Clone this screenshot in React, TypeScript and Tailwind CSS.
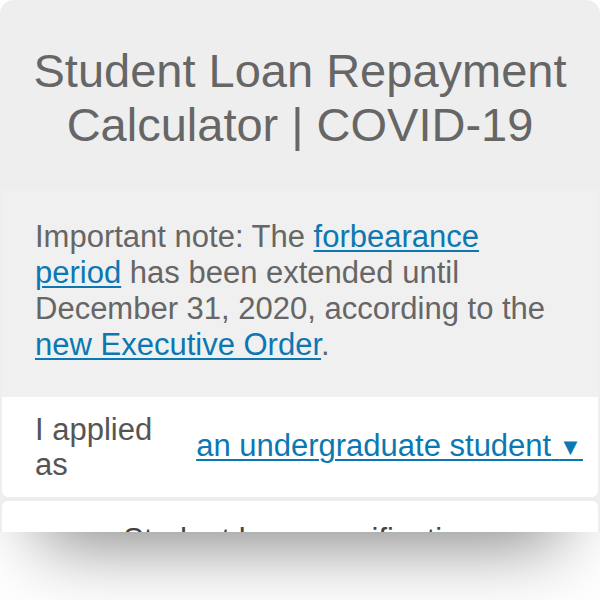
import React from "react";

const App: React.FC = () => {
  return (
    <div className="h-[600px] w-[600px] bg-white font-['Liberation_Sans',Arial,sans-serif]">
      <div className="h-[532px] overflow-hidden rounded-t-[14px] bg-[#eeeeee] shadow-[0_50px_70px_-40px_rgba(0,0,0,0.5)]">
        {/* Title */}
        <header className="pt-[44px] pb-[38px] text-center text-[47px] leading-[54px] text-[#666666]">
          <h1>
            Student Loan Repayment
            <br />
            Calculator | COVID-19
          </h1>
        </header>

        <div className="flex flex-col px-[2px]">
          {/* Note */}
          <div className="bg-[#f0f0f0] pt-[29px] pb-[34px] pl-[33px] text-[31px] leading-[36px] text-[#666666]">
            <p>
              Important note: The{" "}
              <a href="#" className="text-[#0b78b3] underline underline-offset-[3px] decoration-[2px]">
                forbearance
                <br />
                period
              </a>{" "}
              has been extended until
              <br />
              December 31, 2020, according to the
              <br />
              <a href="#" className="text-[#0b78b3] underline underline-offset-[3px] decoration-[2px]">
                new Executive Order
              </a>
              .
            </p>
          </div>

          {/* Applied as */}
          <div className="flex h-[100px] items-center justify-between rounded-b-[6px] bg-white pl-[33px] pr-[15px]">
            <label className="w-[140px] text-[31px] leading-[35px] text-[#555555]">I applied as</label>
            <a href="#" className="whitespace-nowrap text-[31px] leading-[35px] text-[#0b78b3] underline underline-offset-[3px] decoration-[2px]">
              an undergraduate student{" "}
              <span className="relative -top-[3px] font-['DejaVu_Sans'] text-[18px]">{"\u2009\u25BC\u00A0"}</span>
            </a>
          </div>

          {/* Next section */}
          <div className="mt-[4px] rounded-t-[6px] bg-white pt-[21px] text-center text-[31px] leading-[35px] text-[#444444]">
            Student loan specification
          </div>
        </div>
      </div>
    </div>
  );
};

export default App;
